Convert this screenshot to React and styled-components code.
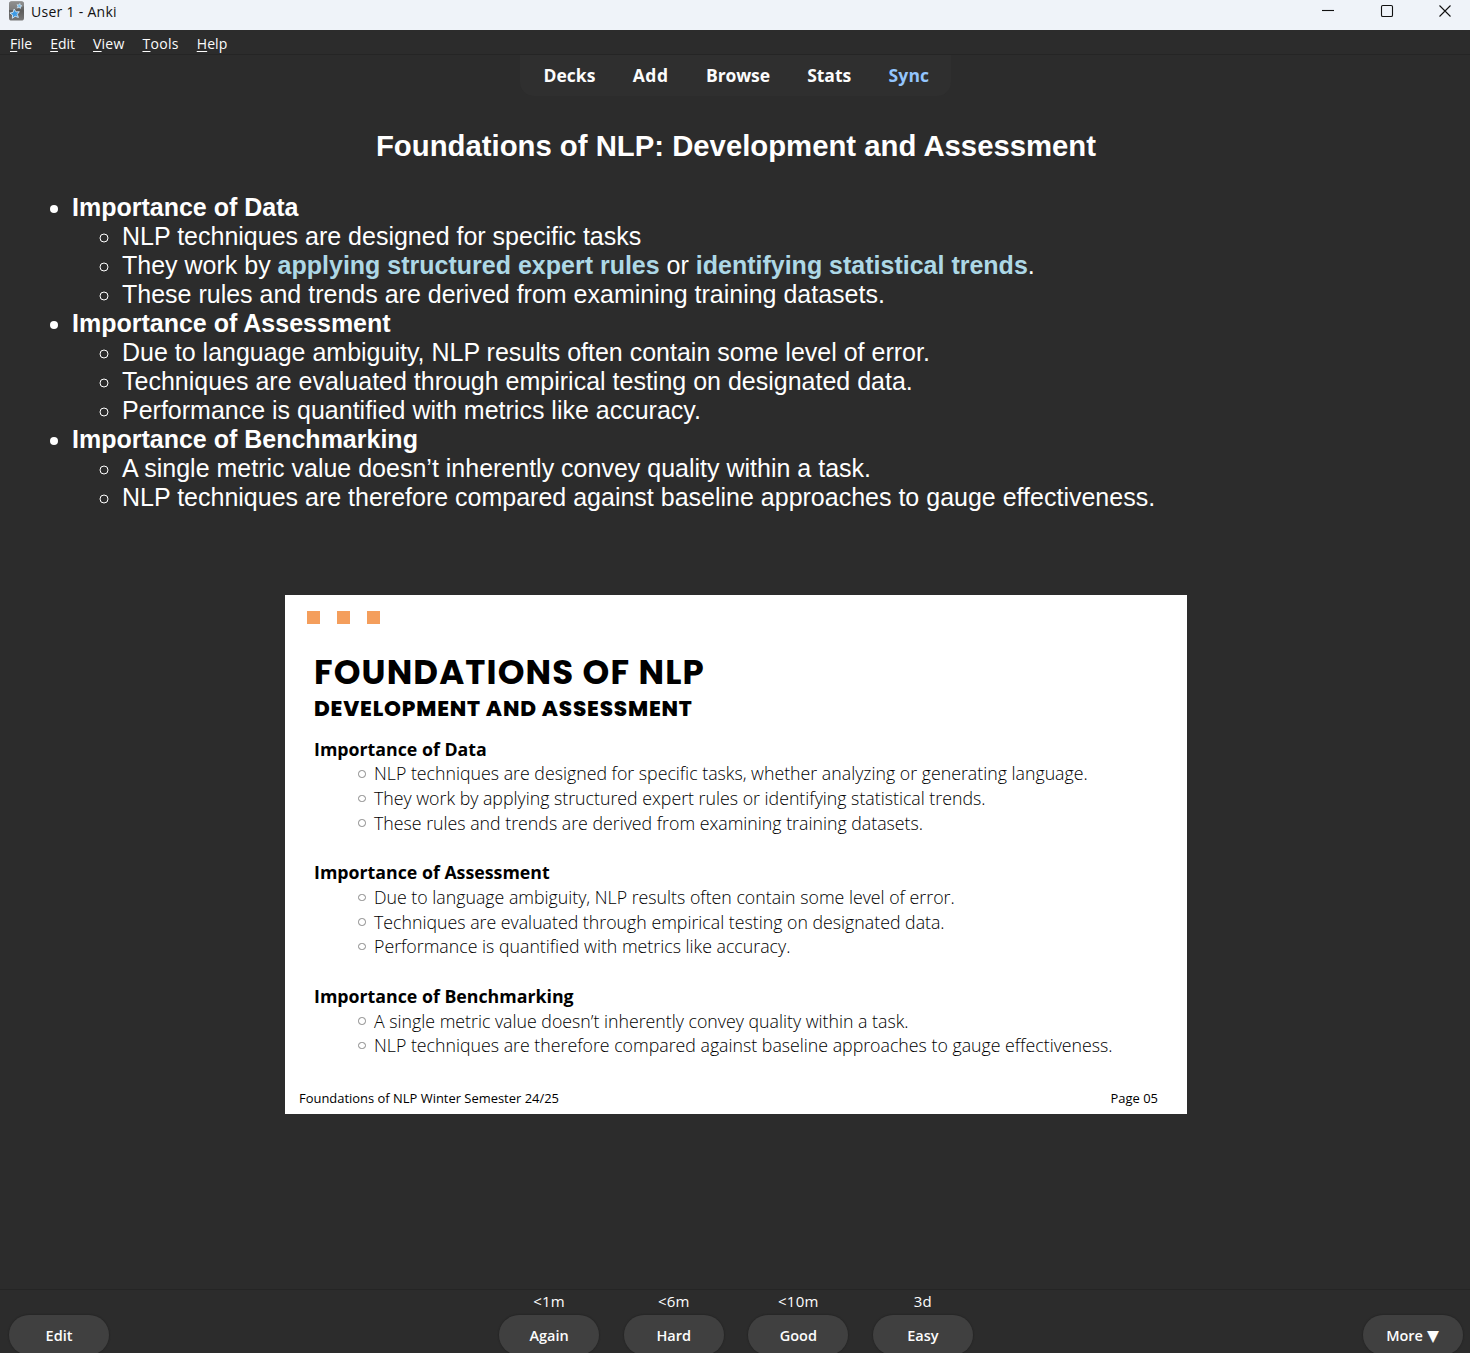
import React from "react";
import styled, { createGlobalStyle } from "styled-components";

const Global = createGlobalStyle`
  *, *::before, *::after { box-sizing: border-box; }
  html, body { margin: 0; padding: 0; overflow: hidden; background: #2c2c2c; }
`;

const ui = `"Segoe UI", "Open Sans", "Noto Sans", sans-serif`;

const Window = styled.div`
  display: flex;
  flex-direction: column;
  width: 1470px;
  height: 1353px;
  overflow: hidden;
  background: #2c2c2c;
  color: #fcfcfc;
  font-family: ${ui};
`;

const Run = styled.span`
  letter-spacing: ${(p) => p.$ls || 0}px;
  white-space: nowrap;
`;

const TitleBar = styled.header`
  display: flex;
  align-items: flex-start;
  flex: 0 0 30px;
  padding: 1px 18px 0 8px;
  background: #eff3f9;
  color: #111;
`;

const AppIcon = styled.svg`
  flex: none;
  width: 17px;
  height: 20px;
`;

const AppName = styled.div`
  margin-left: 6px;
  font-size: 14px;
  line-height: 22px;
`;

const Controls = styled.div`
  display: flex;
  gap: 44.5px;
  margin: 3px 0 0 auto;
`;

const ControlIcon = styled.svg`
  width: 14px;
  height: 14px;
  fill: none;
  stroke: #111;
  stroke-width: 1.1;
`;

const MenuBar = styled.nav`
  display: flex;
  flex: 0 0 25px;
  gap: 18px;
  padding: 4px 10px 0;
  border-bottom: 1px solid #252525;
  font-size: 14px;
  line-height: 20px;
`;

const Key = styled.span`
  text-decoration: underline;
  text-decoration-thickness: 1px;
  text-underline-offset: 2px;
`;

const Toolbar = styled.nav`
  display: flex;
  align-self: center;
  flex: 0 0 40px;
  width: 431px;
  gap: 37.3px;
  padding-left: 24px;
  border-radius: 0 0 14px 14px;
  background: #2f2f2f;
  font-size: 17.5px;
  font-weight: 700;
  line-height: 41px;
`;

const Link = styled.a`
  color: ${(p) => (p.$active ? "#93c5fd" : "#fcfcfc")};
`;

const Card = styled.main`
  flex: 1;
  min-height: 0;
  font-family: Arial, "Liberation Sans", sans-serif;
  font-size: 25px;
  line-height: 29px;
  color: #fff;
`;

const Heading = styled.h1`
  margin: 32px 0 30px 2px;
  text-align: center;
  font-size: 29.3px;
  line-height: 35px;
  font-weight: 700;
`;

const Topics = styled.ul`
  margin: 0;
  padding-left: 72px;
  list-style: disc;
`;

const Points = styled.ul`
  margin: 0;
  padding-left: 50px;
  list-style: circle;
`;

const Mark = styled.strong`
  color: #add8e6;
`;

const Slide = styled.section`
  display: flex;
  flex-direction: column;
  width: 902px;
  height: 519px;
  margin: 83px 0 0 285px;
  padding: 16px 29px 6px;
  background: #fff;
  color: #000;
  font-family: "Open Sans", sans-serif;
`;

const Squares = styled.div`
  display: flex;
  flex: none;
  gap: 17px;
  margin-left: -7px;
`;

const Square = styled.i`
  width: 13px;
  height: 13px;
  background: #f49e5c;
`;

const SlideTitle = styled.h2`
  margin: 23px 0 0;
  font-family: Poppins, Inter, sans-serif;
  font-size: 34px;
  line-height: 50px;
  font-weight: 700;
`;

const SlideSubtitle = styled.h3`
  margin: 0 0 15.6px;
  font-family: Poppins, Inter, sans-serif;
  font-size: 21.5px;
  line-height: 24px;
  font-weight: 800;
`;

const Group = styled.div`
  flex: none;
  height: 123.6px;
`;

const GroupTitle = styled.h4`
  margin: 0;
  font-size: 17.75px;
  line-height: 25px;
  font-weight: 700;
`;

const Line = styled.div`
  display: flex;
  align-items: center;
  height: 24.6px;
  padding-left: 44px;
  font-size: 17.75px;
  font-weight: 300;
  color: #000;
`;

const Ring = styled.i`
  width: 7.5px;
  height: 7.5px;
  margin-right: 8.5px;
  border: 1px solid #888;
  border-radius: 50%;
`;

const Foot = styled.footer`
  display: flex;
  justify-content: space-between;
  margin: -18.6px 0 0 -15px;
  font-size: 12.95px;
  line-height: 18px;
`;

const BottomBar = styled.footer`
  display: flex;
  flex: 0 0 64px;
  min-height: 0;
  justify-content: space-between;
  padding: 0 7px 0 9px;
  border-top: 1px solid #252525;
`;

const Answers = styled.div`
  display: flex;
  gap: 24.6px;
`;

const Answer = styled.div`
  width: 100px;
  text-align: center;
  font-size: 15px;
  line-height: 22px;
`;

const Due = styled.div`
  height: 25px;
`;

const Button = styled.button`
  display: flex;
  align-items: center;
  justify-content: center;
  gap: 4px;
  width: 100px;
  height: 40px;
  padding: 2px 0 0;
  border: 0;
  border-radius: 20px;
  background: #404040;
  box-shadow: 0 0 1px 1px #272727;
  color: #fcfcfc;
  font: 600 14.5px/38px ${ui};
`;

const Caret = styled.span`
  margin-right: 1px;
  font: 15.5px/38px "DejaVu Sans", sans-serif;
`;

const menus = [["File", 0], ["Edit", 0], ["View", 0.2], ["Tools", 0.3], ["Help", 0.1]];
const links = [["Decks", 0], ["Add", 0.6], ["Browse", -0.1], ["Stats", -0.05], ["Sync", 0.2]];
const groups = [
  ["Importance of Data", [
    "NLP techniques are designed for specific tasks, whether analyzing or generating language.",
    "They work by applying structured expert rules or identifying statistical trends.",
    "These rules and trends are derived from examining training datasets."]],
  ["Importance of Assessment", [
    "Due to language ambiguity, NLP results often contain some level of error.",
    "Techniques are evaluated through empirical testing on designated data.",
    "Performance is quantified with metrics like accuracy."]],
  ["Importance of Benchmarking", [
    "A single metric value doesn’t inherently convey quality within a task.",
    "NLP techniques are therefore compared against baseline approaches to gauge effectiveness."]],
];
const topics = [
  ["Importance of Data", [
    "NLP techniques are designed for specific tasks",
    <>They work by <Mark>applying structured expert rules</Mark> or <Mark>identifying statistical trends</Mark>.</>,
    "These rules and trends are derived from examining training datasets."]],
  groups[1],
  groups[2],
];
const answers = [["<1m", "Again"], ["<6m", "Hard"], ["<10m", "Good"], ["3d", "Easy"]];

const star = "M0 -5 L1.6 -1.8 L5 -1.5 L2.5 .9 L3.2 4.3 L0 2.6 L-3.2 4.3 L-2.5 .9 L-5 -1.5 L-1.6 -1.8Z";

export default function App() {
  return (
    <>
      <Global />
      <Window>
        <TitleBar>
          <AppIcon viewBox="0 0 17 20">
            <defs>
              <linearGradient id="body" x1="0" y1="0" x2="0" y2="1">
                <stop offset="0" stopColor="#858585" />
                <stop offset="0.5" stopColor="#5c5c5c" />
                <stop offset="1" stopColor="#777" />
              </linearGradient>
            </defs>
            <rect x="1" y="0.3" width="15" height="19.2" rx="2.6" fill="url(#body)" />
            <path d="M1 9 Q8 10 16 5 V3 Q16 .3 13 .3 H4 Q1 .3 1 3Z" fill="#999" opacity=".5" />
            <path d={star} transform="translate(6.8 12.8) rotate(-8) scale(.95)" fill="#3d9be6" stroke="#d5e8f7" strokeWidth=".9" />
            <path d={star} transform="translate(11.3 5) rotate(12) scale(.5)" fill="#6fbcf0" stroke="#d3e5f2" strokeWidth="1.4" />
          </AppIcon>
          <AppName><Run $ls={0.28}>User 1 - Anki</Run></AppName>
          <Controls>
            <ControlIcon viewBox="0 0 14 14"><path d="M1 6.5H13" /></ControlIcon>
            <ControlIcon viewBox="0 0 14 14"><rect x="1.5" y="1.5" width="11" height="11" rx="1.3" /></ControlIcon>
            <ControlIcon viewBox="0 0 14 14"><path d="M1.5 1.5L12.5 12.5M12.5 1.5L1.5 12.5" /></ControlIcon>
          </Controls>
        </TitleBar>
        <MenuBar>
          {menus.map(([t, ls]) => <Run key={t} $ls={ls}><Key>{t[0]}</Key>{t.slice(1)}</Run>)}
        </MenuBar>
        <Toolbar>
          {links.map(([t, ls]) => <Link key={t} $active={t === "Sync"}><Run $ls={ls}>{t}</Run></Link>)}
        </Toolbar>
        <Card>
          <Heading>Foundations of NLP: Development and Assessment</Heading>
          <Topics>
            {topics.map(([title, points]) => (
              <li key={title}>
                <strong>{title}</strong>
                <Points>{points.map((p, i) => <li key={i}>{p}</li>)}</Points>
              </li>
            ))}
          </Topics>
          <Slide>
            <Squares><Square /><Square /><Square /></Squares>
            <SlideTitle><Run $ls={1.12}>FOUNDATIONS OF NLP</Run></SlideTitle>
            <SlideSubtitle><Run $ls={0.82}>DEVELOPMENT AND ASSESSMENT</Run></SlideSubtitle>
            {groups.map(([title, lines]) => (
              <Group key={title}>
                <GroupTitle>{title}</GroupTitle>
                {lines.map((l) => <Line key={l}><Ring /><Run>{l}</Run></Line>)}
              </Group>
            ))}
            <Foot><span>Foundations of NLP Winter Semester 24/25</span><span>Page 05</span></Foot>
          </Slide>
        </Card>
        <BottomBar>
          <Answer><Due /><Button>Edit</Button></Answer>
          <Answers>
            {answers.map(([due, label]) => (
              <Answer key={label}><Due><Run $ls={0.2}>{due}</Run></Due><Button>{label}</Button></Answer>
            ))}
          </Answers>
          <Answer><Due /><Button>More <Caret>▼</Caret></Button></Answer>
        </BottomBar>
      </Window>
    </>
  );
}
